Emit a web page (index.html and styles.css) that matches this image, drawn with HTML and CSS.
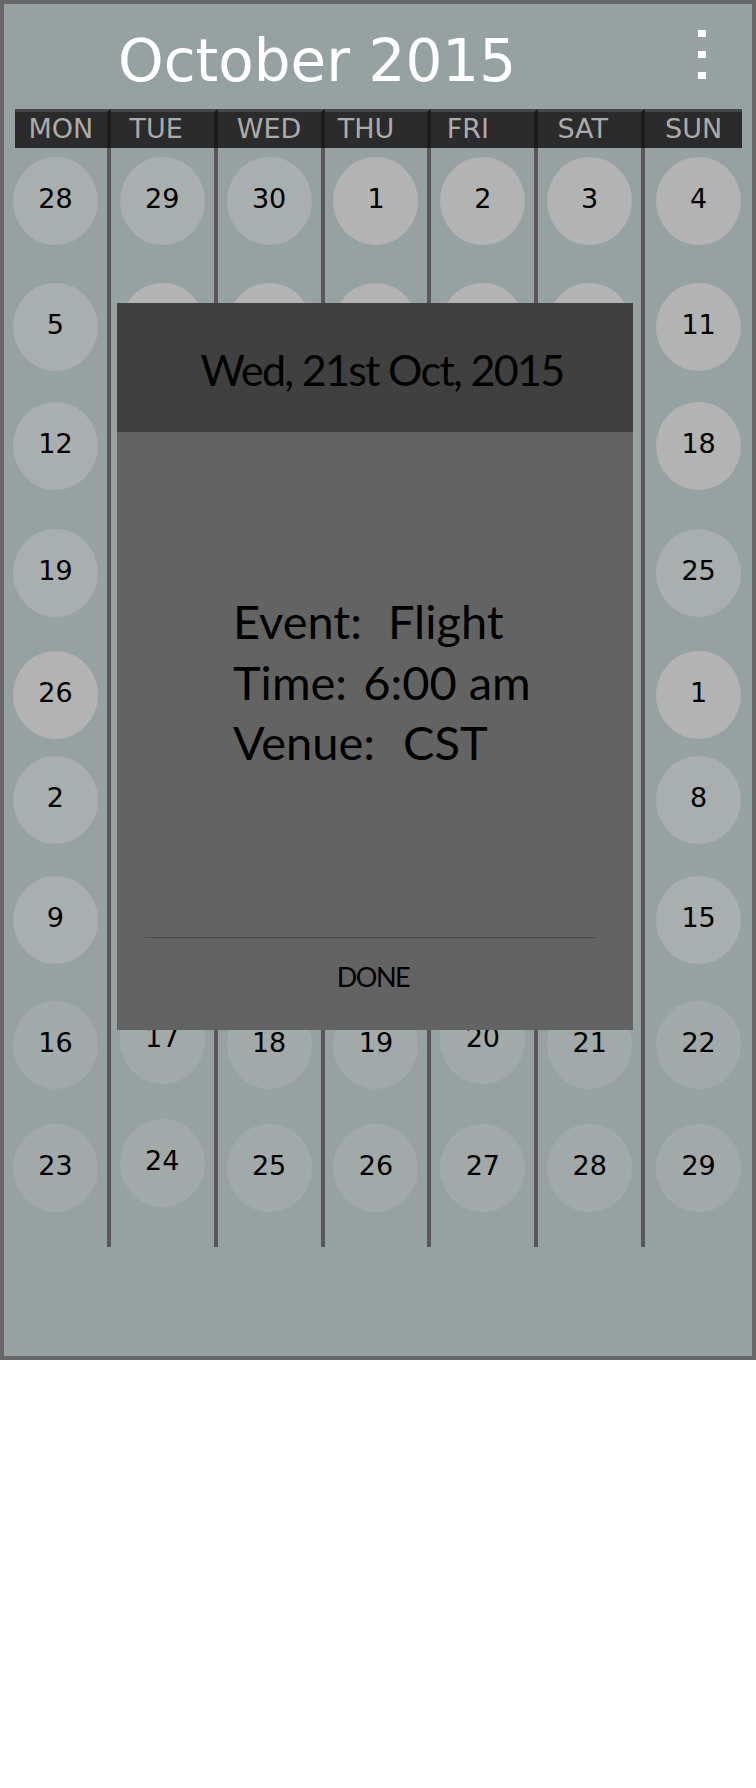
FILE: index.html
```html
<!DOCTYPE html>
<html>
<head>
<meta charset="utf-8">
<link rel="stylesheet" href="styles.css">
</head>
<body>
<div class="frame">
  <header class="topbar">
    <h1 class="title">October 2015</h1>
    <div class="kebab"><span></span><span></span><span></span></div>
  </header>
  <div class="cal">
    <div class="wd wd-first">MON</div>
    <div class="wd wd-tue">TUE</div>
    <div class="wd">WED</div>
    <div class="wd wd-thu">THU</div>
    <div class="wd wd-fri">FRI</div>
    <div class="wd wd-sat">SAT</div>
    <div class="wd wd-last">SUN</div>

    <div class="day"><span class="dot">28</span></div>
    <div class="day"><span class="dot">29</span></div>
    <div class="day"><span class="dot">30</span></div>
    <div class="day"><span class="dot n">1</span></div>
    <div class="day"><span class="dot n">2</span></div>
    <div class="day"><span class="dot n">3</span></div>
    <div class="day"><span class="dot n">4</span></div>

    <div class="day"><span class="dot">5</span></div>
    <div class="day"><span class="dot n">6</span></div>
    <div class="day"><span class="dot n">7</span></div>
    <div class="day"><span class="dot n">8</span></div>
    <div class="day"><span class="dot n">9</span></div>
    <div class="day"><span class="dot n">10</span></div>
    <div class="day"><span class="dot n">11</span></div>

    <div class="day"><span class="dot">12</span></div>
    <div class="day"><span class="dot n">13</span></div>
    <div class="day"><span class="dot n">14</span></div>
    <div class="day"><span class="dot n">15</span></div>
    <div class="day"><span class="dot n">16</span></div>
    <div class="day"><span class="dot n">17</span></div>
    <div class="day"><span class="dot n">18</span></div>

    <div class="day"><span class="dot">19</span></div>
    <div class="day"><span class="dot">20</span></div>
    <div class="day"><span class="dot">21</span></div>
    <div class="day"><span class="dot">22</span></div>
    <div class="day"><span class="dot">23</span></div>
    <div class="day"><span class="dot">24</span></div>
    <div class="day"><span class="dot">25</span></div>

    <div class="day"><span class="dot n">26</span></div>
    <div class="day"><span class="dot n">27</span></div>
    <div class="day"><span class="dot n">28</span></div>
    <div class="day"><span class="dot n">29</span></div>
    <div class="day"><span class="dot n">30</span></div>
    <div class="day"><span class="dot n">31</span></div>
    <div class="day"><span class="dot n">1</span></div>

    <div class="day"><span class="dot">2</span></div>
    <div class="day"><span class="dot">3</span></div>
    <div class="day"><span class="dot">4</span></div>
    <div class="day"><span class="dot">5</span></div>
    <div class="day"><span class="dot">6</span></div>
    <div class="day"><span class="dot">7</span></div>
    <div class="day"><span class="dot">8</span></div>

    <div class="day"><span class="dot">9</span></div>
    <div class="day"><span class="dot">10</span></div>
    <div class="day"><span class="dot">11</span></div>
    <div class="day"><span class="dot">12</span></div>
    <div class="day"><span class="dot">13</span></div>
    <div class="day"><span class="dot">14</span></div>
    <div class="day"><span class="dot">15</span></div>

    <div class="day"><span class="dot l">16</span></div>
    <div class="day"><span class="dot l up">17</span></div>
    <div class="day"><span class="dot l">18</span></div>
    <div class="day"><span class="dot l">19</span></div>
    <div class="day"><span class="dot l up">20</span></div>
    <div class="day"><span class="dot l">21</span></div>
    <div class="day"><span class="dot l">22</span></div>

    <div class="day"><span class="dot l">23</span></div>
    <div class="day"><span class="dot l up">24</span></div>
    <div class="day"><span class="dot l">25</span></div>
    <div class="day"><span class="dot l">26</span></div>
    <div class="day"><span class="dot l">27</span></div>
    <div class="day"><span class="dot l">28</span></div>
    <div class="day"><span class="dot l">29</span></div>
  </div>

  <div class="modal">
    <div class="modal-head">Wed, 21st Oct, 2015</div>
    <div class="modal-body">
      <div class="line"><span class="key">Event:</span><span class="val val-event">Flight</span></div>
      <div class="line"><span class="key">Time:</span><span class="val val-time">6:00 am</span></div>
      <div class="line"><span class="key">Venue:</span><span class="val val-venue">CST</span></div>
    </div>
    <div class="modal-rule"></div>
    <div class="modal-action">DONE</div>
  </div>
</div>
</body>
</html>
```

FILE: styles.css
```css
html, body {
  margin: 0;
  padding: 0;
  background: #ffffff;
}

.frame {
  position: relative;
  box-sizing: border-box;
  width: 756px;
  height: 1360px;
  border: 4px solid #676767;
  background: #96a2a2;
  font-family: "DejaVu Sans", Verdana, sans-serif;
}

.topbar {
  display: flex;
  align-items: flex-start;
  height: 105px;
  padding-left: 114px;
}

.title {
  margin: 28px 0 0 0;
  font-size: 58px;
  line-height: 58px;
  font-weight: normal;
  color: #ffffff;
}

.kebab {
  margin-left: auto;
  margin-right: 46px;
  margin-top: 26px;
  display: flex;
  flex-direction: column;
  gap: 14px;
}

.kebab span {
  display: block;
  width: 8px;
  height: 7px;
  background: #ffffff;
}

.cal {
  display: grid;
  grid-template-columns: repeat(7, 1fr);
  grid-template-rows: 39px 126px 119px 127px 122px 105px 120px 125px 123px 132px;
}

.wd {
  background: #2b2b2b;
  border-top: 3px solid #464646;
  border-right: 4px solid #1d1d1d;
  color: #ababab;
  font-size: 27px;
  line-height: 34px;
  text-align: center;
}

.wd-first { margin-left: 11px; }
.wd-last { margin-right: 10px; border-right: 0; }
.wd-tue { padding-right: 12px; }
.wd-thu { padding-right: 20px; }
.wd-fri { padding-right: 30px; }
.wd-sat { padding-right: 14px; }

.day {
  display: flex;
  justify-content: center;
  align-items: flex-start;
  padding-top: 9px;
  border-right: 4px solid #585858;
}

.cal > .day:nth-child(7n) {
  border-right: 0;
}

.dot {
  width: 85px;
  height: 88px;
  border-radius: 50%;
  background: #a9aeae;
  display: flex;
  align-items: center;
  justify-content: center;
  padding-bottom: 5px;
  box-sizing: border-box;
  font-size: 27px;
  color: #000000;
}

.dot.n { background: #b3b3b3; }
.dot.l { background: #a2a9a9; }
.dot.up { margin-top: -5px; }

.modal {
  position: absolute;
  left: 113px;
  top: 299px;
  width: 516px;
  height: 727px;
  display: flex;
  flex-direction: column;
  background: #636363;
  font-family: Lato, "Open Sans", sans-serif;
  color: #000000;
}

.modal-head {
  height: 129px;
  box-sizing: border-box;
  padding-top: 4px;
  padding-left: 14px;
  background: #404040;
  display: flex;
  align-items: center;
  justify-content: center;
  font-size: 43px;
  letter-spacing: -1.7px;
}

.modal-body {
  flex: 1;
  padding: 159px 0 0 116px;
  font-size: 47px;
  line-height: 60.5px;
}

.line {
  display: flex;
  white-space: pre;
}

.val-event { margin-left: 26px; }
.val-time { margin-left: 16px; }
.val-venue { margin-left: 28px; }

.modal-rule {
  height: 1px;
  background: #4a4a4a;
  margin: 0 38px 0 28px;
}

.modal-action {
  height: 92px;
  box-sizing: border-box;
  padding-top: 24px;
  padding-right: 4px;
  text-align: center;
  font-size: 27px;
  line-height: 30px;
  letter-spacing: -1.5px;
}
```
